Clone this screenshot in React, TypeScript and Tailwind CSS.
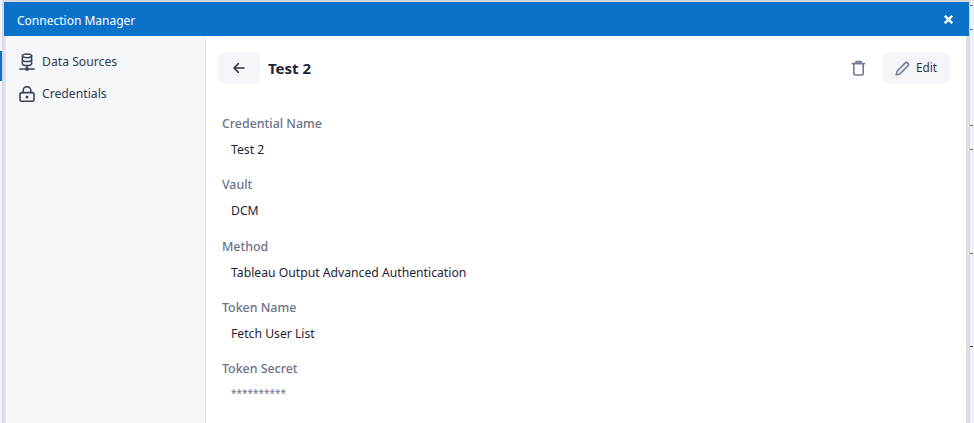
import React from "react";

function DbIcon() {
  return (
    <svg width="16" height="18" viewBox="0 0 16 18" fill="none" stroke="#3c4257" strokeWidth="1.5" strokeLinecap="round" strokeLinejoin="round">
      <ellipse cx="8" cy="2.8" rx="4.6" ry="1.9" />
      <path d="M3.4 2.8v8c0 1 2.1 1.8 4.6 1.8s4.6-.8 4.6-1.8v-8" />
      <path d="M3.4 6.8c0 1 2.1 1.8 4.6 1.8s4.6-.8 4.6-1.8" />
      <path d="M8 12.6v2.4M.8 16h5M10.2 16h5" />
      <circle cx="8" cy="16" r="1.2" fill="#3c4257" />
    </svg>
  );
}

function Field({ label, value, muted }: { label: string; value: string; muted?: boolean }) {
  return (
    <div className="flex h-[61.3px] flex-col">
      <div className="h-[24px] text-[12.4px] font-medium leading-[24px] text-[#6b7288]">{label}</div>
      <div className={`pl-[9px] leading-[24px] ${muted ? "text-[10px] text-[#6b7288]" : "mt-[2px] text-[12.2px] text-[#1f2433]"}`}>{value}</div>
    </div>
  );
}

function Tick({ top, blue }: { top: number; blue?: boolean }) {
  return <div className={`h-px w-[3px] ${blue ? "bg-[#3a3ad0]" : "bg-[#5f6670]"}`} style={{ marginTop: top }} />;
}

export default function App() {
  return (
    <div className="flex h-[423px] w-[974px] overflow-hidden bg-white font-['Noto_Sans','Open_Sans',sans-serif]">
      <div className="flex w-[4px] shrink-0">
        <div className="w-[2px] bg-[#f2f4f8] pt-[51px]">
          <div className="h-[30px] w-[2px] bg-[#0b72c9]" />
        </div>
        <div className="w-[2px] bg-[#d3d9ea]" />
      </div>
      <div className="flex w-[965px] shrink-0 flex-col border-t-2 border-[#d5d8de]">
        <div className="flex h-[34px] shrink-0 items-center justify-between bg-[#0b72c9] pl-[13px] pr-[16px]">
          <span className="mt-[3px] text-[12px] text-white">Connection Manager</span>
          <svg width="9" height="9" viewBox="0 0 9 9" stroke="#fff" strokeWidth="2.4" className="mt-[1px]">
            <path d="M.8.8l7.4 7.4M8.2.8.8 8.2" />
          </svg>
        </div>
        <div className="flex min-h-0 flex-1 border-r-[3px] border-[#dfdfe1]">
          <nav className="flex w-[202px] shrink-0 flex-col border-r border-l-2 border-r-[#e4e8f2] border-l-[#e1e3ea] bg-[#f5f7fb] pl-[13px] pt-[10px]">
            <div className="flex h-[32px] items-center gap-[7px] text-[12.2px] text-[#31384b]">
              <DbIcon />
              <span>Data Sources</span>
            </div>
            <div className="flex h-[32px] items-center gap-[7px] text-[12.2px] text-[#31384b]">
              <svg width="16" height="16" viewBox="0 0 16 16" fill="none" stroke="#3c4257" strokeWidth="1.6" strokeLinecap="round" strokeLinejoin="round">
                <rect x="1" y="6.6" width="14" height="8.6" rx="2" />
                <path d="M4.2 6.6V4.4a3.8 3.8 0 0 1 7.6 0v2.2" />
                <circle cx="8" cy="11" r="0.7" fill="#3c4257" />
              </svg>
              <span>Credentials</span>
            </div>
          </nav>
          <main className="flex min-w-0 flex-1 flex-col pl-[12px] pr-[16px] pt-[17px]">
            <div className="flex h-[30px] items-center justify-between">
              <div className="flex items-center gap-[8px]">
                <button className="flex h-[30px] w-[42px] items-center justify-center rounded-[4px] bg-[#f3f5f9]">
                  <svg width="14" height="14" viewBox="0 0 14 14" fill="none" stroke="#2f3547" strokeWidth="1.5" strokeLinecap="round" strokeLinejoin="round">
                    <path d="M12 7H2.2M6.4 2.6 2 7l4.4 4.4" />
                  </svg>
                </button>
                <span className="text-[15px] font-bold text-[#1f2433]">Test 2</span>
              </div>
              <div className="flex items-center gap-[16px]">
                <svg width="15" height="16" viewBox="0 0 15 16" fill="none" stroke="#6e7a94" strokeWidth="1.6" strokeLinecap="round" strokeLinejoin="round">
                  <path d="M1.4 3.6h12.2M5 3.4V1.6h5v1.8M2.8 3.6v10a1.4 1.4 0 0 0 1.4 1.4h6.6a1.4 1.4 0 0 0 1.4-1.4v-10" />
                </svg>
                <button className="flex h-[30px] w-[68px] items-center justify-center gap-[6px] rounded-[4px] bg-[#f3f5f9] text-[11.8px] text-[#2f3547]">
                  <svg width="15" height="15" viewBox="0 0 15 15" fill="none" stroke="#6e7a94" strokeWidth="1.5" strokeLinecap="round" strokeLinejoin="round">
                    <path d="M1.2 13.8 2 10.2 10.4 1.9a1.5 1.5 0 0 1 2.1 0l.6.6a1.5 1.5 0 0 1 0 2.1L4.8 13z" />
                  </svg>
                  <span>Edit</span>
                </button>
              </div>
            </div>
            <div className="mt-[29px] flex flex-col pl-[4px]">
              <Field label="Credential Name" value="Test 2" />
              <Field label="Vault" value="DCM" />
              <Field label="Method" value="Tableau Output Advanced Authentication" />
              <Field label="Token Name" value="Fetch User List" />
              <Field label="Token Secret" value="**********" muted />
            </div>
          </main>
        </div>
      </div>
      <div className="flex w-[5px] shrink-0">
        <div className="w-px bg-[#d3d9ea]" />
        <div className="w-[4px] bg-[#f1f3f6]">
          <Tick top={5} />
          <Tick top={23} />
          <Tick top={95} />
          <Tick top={23} />
          <Tick top={103} />
          <Tick top={92} blue />
        </div>
      </div>
    </div>
  );
}
